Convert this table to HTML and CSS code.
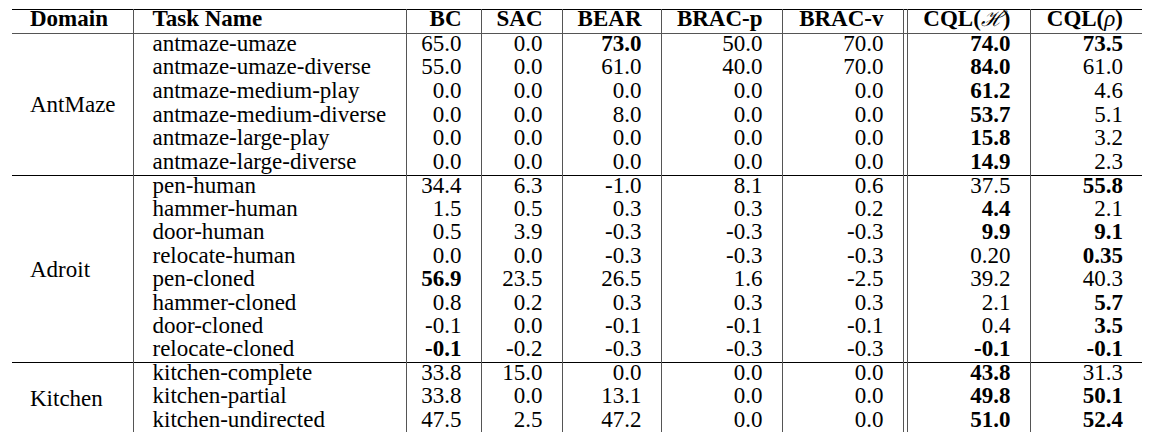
FILE: index.html
```html
<!DOCTYPE html>
<html>
<head>
<meta charset="utf-8">
<link rel="stylesheet" href="styles.css">
</head>
<body>
<table class="results">
  <colgroup>
    <col class="c-domain"><col class="c-task"><col class="c-bc"><col class="c-sac"><col class="c-bear"><col class="c-bracp"><col class="c-bracv"><col class="c-gap"><col class="c-cqlh"><col class="c-cqlr">
  </colgroup>
  <thead>
    <tr>
      <th class="dom">Domain</th>
      <th class="task">Task Name</th>
      <th class="num">BC</th>
      <th class="num">SAC</th>
      <th class="num">BEAR</th>
      <th class="num">BRAC-p</th>
      <th class="num">BRAC-v</th>
      <th class="gap"></th>
      <th class="num">CQL(<span class="math cal">ℋ</span>)</th>
      <th class="num">CQL(<span class="math it">ρ</span>)</th>
    </tr>
  </thead>
  <tbody class="sec ant">
    <tr><td class="dom" rowspan="6">AntMaze</td><td class="task">antmaze-umaze</td><td class="num">65.0</td><td class="num">0.0</td><td class="num"><b>73.0</b></td><td class="num">50.0</td><td class="num">70.0</td><td class="gap"></td><td class="num"><b>74.0</b></td><td class="num"><b>73.5</b></td></tr>
    <tr><td class="task">antmaze-umaze-diverse</td><td class="num">55.0</td><td class="num">0.0</td><td class="num">61.0</td><td class="num">40.0</td><td class="num">70.0</td><td class="gap"></td><td class="num"><b>84.0</b></td><td class="num">61.0</td></tr>
    <tr><td class="task">antmaze-medium-play</td><td class="num">0.0</td><td class="num">0.0</td><td class="num">0.0</td><td class="num">0.0</td><td class="num">0.0</td><td class="gap"></td><td class="num"><b>61.2</b></td><td class="num">4.6</td></tr>
    <tr><td class="task">antmaze-medium-diverse</td><td class="num">0.0</td><td class="num">0.0</td><td class="num">8.0</td><td class="num">0.0</td><td class="num">0.0</td><td class="gap"></td><td class="num"><b>53.7</b></td><td class="num">5.1</td></tr>
    <tr><td class="task">antmaze-large-play</td><td class="num">0.0</td><td class="num">0.0</td><td class="num">0.0</td><td class="num">0.0</td><td class="num">0.0</td><td class="gap"></td><td class="num"><b>15.8</b></td><td class="num">3.2</td></tr>
    <tr><td class="task">antmaze-large-diverse</td><td class="num">0.0</td><td class="num">0.0</td><td class="num">0.0</td><td class="num">0.0</td><td class="num">0.0</td><td class="gap"></td><td class="num"><b>14.9</b></td><td class="num">2.3</td></tr>
  </tbody>
  <tbody class="sec">
    <tr><td class="dom" rowspan="8">Adroit</td><td class="task">pen-human</td><td class="num">34.4</td><td class="num">6.3</td><td class="num">-1.0</td><td class="num">8.1</td><td class="num">0.6</td><td class="gap"></td><td class="num">37.5</td><td class="num"><b>55.8</b></td></tr>
    <tr><td class="task">hammer-human</td><td class="num">1.5</td><td class="num">0.5</td><td class="num">0.3</td><td class="num">0.3</td><td class="num">0.2</td><td class="gap"></td><td class="num"><b>4.4</b></td><td class="num">2.1</td></tr>
    <tr><td class="task">door-human</td><td class="num">0.5</td><td class="num">3.9</td><td class="num">-0.3</td><td class="num">-0.3</td><td class="num">-0.3</td><td class="gap"></td><td class="num"><b>9.9</b></td><td class="num"><b>9.1</b></td></tr>
    <tr><td class="task">relocate-human</td><td class="num">0.0</td><td class="num">0.0</td><td class="num">-0.3</td><td class="num">-0.3</td><td class="num">-0.3</td><td class="gap"></td><td class="num">0.20</td><td class="num"><b>0.35</b></td></tr>
    <tr><td class="task">pen-cloned</td><td class="num"><b>56.9</b></td><td class="num">23.5</td><td class="num">26.5</td><td class="num">1.6</td><td class="num">-2.5</td><td class="gap"></td><td class="num">39.2</td><td class="num">40.3</td></tr>
    <tr><td class="task">hammer-cloned</td><td class="num">0.8</td><td class="num">0.2</td><td class="num">0.3</td><td class="num">0.3</td><td class="num">0.3</td><td class="gap"></td><td class="num">2.1</td><td class="num"><b>5.7</b></td></tr>
    <tr><td class="task">door-cloned</td><td class="num">-0.1</td><td class="num">0.0</td><td class="num">-0.1</td><td class="num">-0.1</td><td class="num">-0.1</td><td class="gap"></td><td class="num">0.4</td><td class="num"><b>3.5</b></td></tr>
    <tr><td class="task">relocate-cloned</td><td class="num"><b>-0.1</b></td><td class="num">-0.2</td><td class="num">-0.3</td><td class="num">-0.3</td><td class="num">-0.3</td><td class="gap"></td><td class="num"><b>-0.1</b></td><td class="num"><b>-0.1</b></td></tr>
  </tbody>
  <tbody class="sec">
    <tr><td class="dom" rowspan="3">Kitchen</td><td class="task">kitchen-complete</td><td class="num">33.8</td><td class="num">15.0</td><td class="num">0.0</td><td class="num">0.0</td><td class="num">0.0</td><td class="gap"></td><td class="num"><b>43.8</b></td><td class="num">31.3</td></tr>
    <tr><td class="task">kitchen-partial</td><td class="num">33.8</td><td class="num">0.0</td><td class="num">13.1</td><td class="num">0.0</td><td class="num">0.0</td><td class="gap"></td><td class="num"><b>49.8</b></td><td class="num"><b>50.1</b></td></tr>
    <tr><td class="task">kitchen-undirected</td><td class="num">47.5</td><td class="num">2.5</td><td class="num">47.2</td><td class="num">0.0</td><td class="num">0.0</td><td class="gap"></td><td class="num"><b>51.0</b></td><td class="num"><b>52.4</b></td></tr>
  </tbody>
</table>
</body>
</html>
```
FILE: styles.css
```css
html, body {
  margin: 0;
  padding: 0;
  background: #fff;
}

body {
  padding: 9px 0 0 12px;
}

.results {
  border-collapse: collapse;
  table-layout: fixed;
  width: 1130px;
  font-family: "Liberation Serif", "Times New Roman", Times, serif;
  font-size: 23px;
  color: #000;
}

.c-domain { width: 121px; }
.c-task { width: 273px; }
.c-bc { width: 75px; }
.c-sac { width: 81px; }
.c-bear { width: 99px; }
.c-bracp { width: 121px; }
.c-bracv { width: 121px; }
.c-gap { width: 4px; }
.c-cqlh { width: 123px; }
.c-cqlr { width: 112px; }

.results th,
.results td {
  padding: 0;
  white-space: nowrap;
  overflow: visible;
}

.results thead th {
  height: 23px;
  line-height: 18px;
  padding-bottom: 5px;
  box-sizing: border-box;
  vertical-align: top;
  font-weight: bold;
  border-top: 1px solid #000;
  border-bottom: 1px solid #555;
}

.results tbody td {
  height: 23.4px;
  line-height: 20px;
  vertical-align: top;
  box-sizing: border-box;
}

.results tbody.ant td {
  height: 23.7px;
}

.results tbody.sec tr:first-child td {
  border-top: 1px solid #000;
}

.results .dom {
  text-align: left;
  padding-left: 18px;
  border-right: 1px solid #555;
}

.results tbody td.dom {
  vertical-align: middle;
  line-height: 23px;
}

.results .task {
  text-align: left;
  padding-left: 19px;
  border-right: 1px solid #555;
}

.results .num {
  text-align: right;
  padding-right: 19px;
  border-right: 1px solid #555;
}

.results .gap {
  padding: 0;
  border-right: 1px solid #555;
}

.results .num:last-child {
  border-right: none;
}

.math {
  font-weight: normal;
}

.cal {
  font-family: "DejaVu Serif", serif;
  font-style: italic;
  font-size: 21px;
}

.it {
  font-family: "Liberation Serif", serif;
  font-style: italic;
}

b {
  font-weight: bold;
}
```
